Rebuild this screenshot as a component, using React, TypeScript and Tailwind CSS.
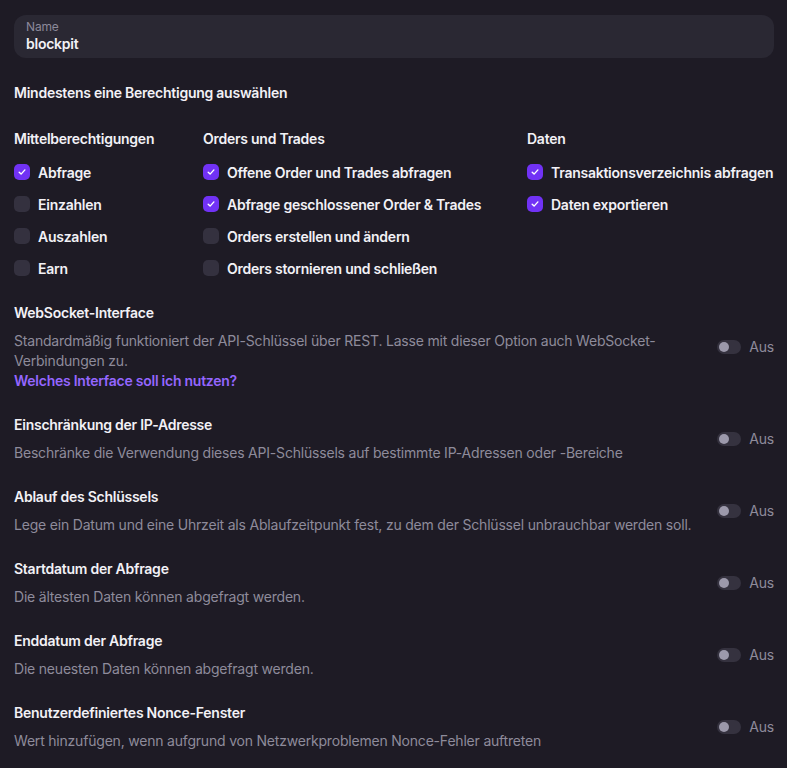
import React from "react";

type Perm = { label: string; checked: boolean };

const columns: { title: string; width: string; items: Perm[] }[] = [
  {
    title: "Mittelberechtigungen",
    width: "w-[189px] shrink-0",
    items: [
      { label: "Abfrage", checked: true },
      { label: "Einzahlen", checked: false },
      { label: "Auszahlen", checked: false },
      { label: "Earn", checked: false },
    ],
  },
  {
    title: "Orders und Trades",
    width: "w-[324px] shrink-0",
    items: [
      { label: "Offene Order und Trades abfragen", checked: true },
      { label: "Abfrage geschlossener Order & Trades", checked: true },
      { label: "Orders erstellen und ändern", checked: false },
      { label: "Orders stornieren und schließen", checked: false },
    ],
  },
  {
    title: "Daten",
    width: "flex-1 min-w-0",
    items: [
      { label: "Transaktionsverzeichnis abfragen", checked: true },
      { label: "Daten exportieren", checked: true },
    ],
  },
];

const options = [
  {
    title: "Einschränkung der IP-Adresse",
    desc: "Beschränke die Verwendung dieses API-Schlüssels auf bestimmte IP-Adressen oder -Bereiche",
  },
  {
    title: "Ablauf des Schlüssels",
    desc: "Lege ein Datum und eine Uhrzeit als Ablaufzeitpunkt fest, zu dem der Schlüssel unbrauchbar werden soll.",
  },
  { title: "Startdatum der Abfrage", desc: "Die ältesten Daten können abgefragt werden." },
  { title: "Enddatum der Abfrage", desc: "Die neuesten Daten können abgefragt werden." },
  {
    title: "Benutzerdefiniertes Nonce-Fenster",
    desc: "Wert hinzufügen, wenn aufgrund von Netzwerkproblemen Nonce-Fehler auftreten",
  },
];

function Checkbox({ checked }: { checked: boolean }) {
  return (
    <span
      className={
        "w-4 h-4 rounded-[5px] flex items-center justify-center shrink-0 " +
        (checked ? "bg-[#7132f5]" : "bg-[#34313f]")
      }
    >
      {checked && (
        <svg width="10" height="10" viewBox="0 0 10 10" fill="none">
          <path d="M2.2 5.3 4.1 7.1 7.9 2.9" stroke="white" strokeWidth="1.4" strokeLinecap="round" strokeLinejoin="round" />
        </svg>
      )}
    </span>
  );
}

function Toggle() {
  return (
    <div className="flex items-center gap-2 shrink-0 ml-4">
      <span className="w-6 h-[14px] rounded-full bg-[#35323f] flex items-center px-[2px]">
        <span className="w-[10px] h-[10px] rounded-full bg-[#9c99ab]" />
      </span>
      <span className="text-[14px] leading-5 text-[#8e8b9b] tracking-[-0.2px]">Aus</span>
    </div>
  );
}

export default function App() {
  return (
    <div
      className="min-h-screen w-[787px] bg-[#1e1b25] pl-[14px] pr-[13px] pt-[15px] text-[#f2f1f6]"
      style={{ fontFamily: "Inter, 'Noto Sans', sans-serif" }}
    >
      {/* Name field */}
      <div className="h-[43px] rounded-xl bg-[#2a2833] px-3 pt-[4px]">
        <div className="text-[12px] leading-[15px] text-[#8c899a] tracking-[-0.15px]">Name</div>
        <div className="text-[14px] leading-5 font-semibold tracking-[-0.25px]">blockpit</div>
      </div>

      <div className="mt-[25px] text-[14px] leading-5 font-semibold tracking-[-0.25px]">
        Mindestens eine Berechtigung auswählen
      </div>

      {/* Permissions */}
      <div className="flex mt-[26px]">
        {columns.map((col) => (
          <div key={col.title} className={col.width}>
            <div className="text-[14px] leading-5 font-semibold tracking-[-0.25px]">{col.title}</div>
            <div className="mt-[7px] flex flex-col">
              {col.items.map((it) => (
                <label key={it.label} className="h-8 flex items-center gap-2">
                  <Checkbox checked={it.checked} />
                  <span className="text-[14px] font-semibold whitespace-nowrap tracking-[-0.25px]">{it.label}</span>
                </label>
              ))}
            </div>
          </div>
        ))}
      </div>

      {/* WebSocket */}
      <div className="mt-[19px] flex items-center">
        <div className="flex-1 min-w-0">
          <div className="text-[14px] leading-5 font-semibold tracking-[-0.25px]">WebSocket-Interface</div>
          <p className="mt-2 text-[14px] leading-5 text-[#8e8b9b] tracking-[-0.2px]">
            Standardmäßig funktioniert der API-Schlüssel über REST. Lasse mit dieser Option auch WebSocket-Verbindungen zu.
          </p>
          <a className="block text-[14px] leading-5 font-semibold text-[#9466ff] tracking-[-0.25px]">
            Welches Interface soll ich nutzen?
          </a>
        </div>
        <Toggle />
      </div>

      {options.map((o) => (
        <div key={o.title} className="mt-6 flex items-center">
          <div className="flex-1 min-w-0">
            <div className="text-[14px] leading-5 font-semibold tracking-[-0.25px]">{o.title}</div>
            <p className="mt-2 text-[14px] leading-5 text-[#8e8b9b] tracking-[-0.2px]">{o.desc}</p>
          </div>
          <Toggle />
        </div>
      ))}
    </div>
  );
}
